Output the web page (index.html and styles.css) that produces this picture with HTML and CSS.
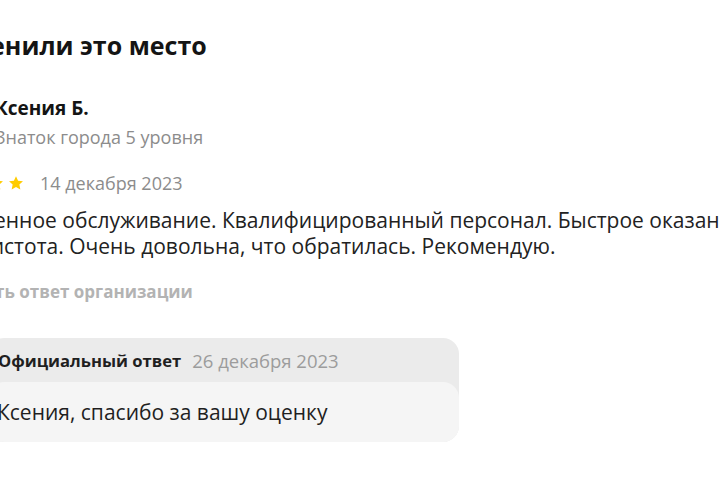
FILE: index.html
```html
<!DOCTYPE html>
<html lang="ru">
<head>
<meta charset="utf-8">
<title>Отзывы</title>
<link rel="stylesheet" href="styles.css">
</head>
<body>
<main class="reviews">
  <h2 class="reviews__title">Оценили это место</h2>
  <article class="review">
    <div class="review__author">
      <div class="review__avatar"></div>
      <div class="review__who">
        <div class="review__name">Ксения Б.</div>
        <div class="review__level">Знаток города 5 уровня</div>
      </div>
    </div>
    <div class="review__meta">
      <div class="stars">
        <svg class="star" viewBox="0 0 20 20"><path d="M10 1.5l2.6 5.6 6.1.7-4.5 4.2 1.2 6.1L10 15.1l-5.4 3 1.2-6.1L1.3 7.8l6.1-.7z"/></svg>
        <svg class="star" viewBox="0 0 20 20"><path d="M10 1.5l2.6 5.6 6.1.7-4.5 4.2 1.2 6.1L10 15.1l-5.4 3 1.2-6.1L1.3 7.8l6.1-.7z"/></svg>
        <svg class="star" viewBox="0 0 20 20"><path d="M10 1.5l2.6 5.6 6.1.7-4.5 4.2 1.2 6.1L10 15.1l-5.4 3 1.2-6.1L1.3 7.8l6.1-.7z"/></svg>
        <svg class="star" viewBox="0 0 20 20"><path d="M10 1.5l2.6 5.6 6.1.7-4.5 4.2 1.2 6.1L10 15.1l-5.4 3 1.2-6.1L1.3 7.8l6.1-.7z"/></svg>
        <svg class="star" viewBox="0 0 20 20"><path d="M10 1.5l2.6 5.6 6.1.7-4.5 4.2 1.2 6.1L10 15.1l-5.4 3 1.2-6.1L1.3 7.8l6.1-.7z"/></svg>
      </div>
      <span class="review__date">14 декабря 2023</span>
    </div>
    <p class="review__text">Качественное обслуживание. Квалифицированный персонал. Быстрое оказание<br>услуг. Чистота. Очень довольна, что обратилась. Рекомендую.</p>
    <div class="review__link">Посмотреть ответ организации</div>
    <div class="answer">
      <div class="answer__head">
        <span class="answer__label">Официальный ответ</span>
        <span class="answer__date">26 декабря 2023</span>
      </div>
      <div class="answer__body">Ксения, спасибо за вашу оценку</div>
    </div>
  </article>
</main>
</body>
</html>
```

FILE: styles.css
```css
html, body {
  margin: 0;
  padding: 0;
  background: #ffffff;
}
body {
  font-family: "Open Sans", "Noto Sans", sans-serif;
  color: #1f1f1f;
  overflow: hidden;
}
.reviews {
  margin-left: -90px;
  padding-top: 27px;
}
.reviews__title {
  margin: 0 0 0 43px;
  font-size: 25px;
  line-height: 36px;
  font-weight: 700;
  color: #141414;
}
.review {
  margin-top: 32px;
}
.review__author {
  display: flex;
  align-items: center;
  gap: 21px;
}
.review__avatar {
  width: 64px;
  height: 56px;
  border-radius: 50%;
  background: #e0e0e0;
  flex: none;
}
.review__name {
  font-size: 19px;
  line-height: 27px;
  font-weight: 700;
  color: #141414;
}
.review__level {
  font-size: 18px;
  line-height: 30px;
  color: #8c8c8c;
}
.review__meta {
  display: flex;
  align-items: center;
  gap: 16px;
  margin-top: 17px;
  margin-left: 18px;
  height: 28px;
}
.stars {
  display: flex;
  gap: 4px;
}
.star {
  width: 16px;
  height: 16px;
  fill: #fc0;
}
.review__date {
  font-size: 18px;
  line-height: 26px;
  color: #8c8c8c;
}
.review__text {
  margin: 10px 0 0 3px;
  font-size: 21px;
  line-height: 26px;
  color: #222222;
  white-space: nowrap;
}
.review__link {
  margin-top: 20px;
  margin-left: -2px;
  font-size: 17px;
  line-height: 26px;
  font-weight: 700;
  color: #b3b3b3;
}
.answer {
  margin-top: 33px;
  margin-left: 78px;
  width: 471px;
  border-radius: 16px;
  background: #ebebeb;
  overflow: hidden;
}
.answer__head {
  display: flex;
  align-items: center;
  gap: 11px;
  height: 44px;
  padding-left: 10px;
}
.answer__label {
  font-size: 16.6px;
  font-weight: 700;
  color: #1f1f1f;
}
.answer__date {
  font-size: 18.5px;
  color: #9c9c9c;
}
.answer__body {
  background: #f5f5f5;
  border-radius: 16px 16px 0 0;
  height: 60px;
  display: flex;
  align-items: center;
  padding-left: 9px;
  font-size: 21px;
  color: #1f1f1f;
}
```
